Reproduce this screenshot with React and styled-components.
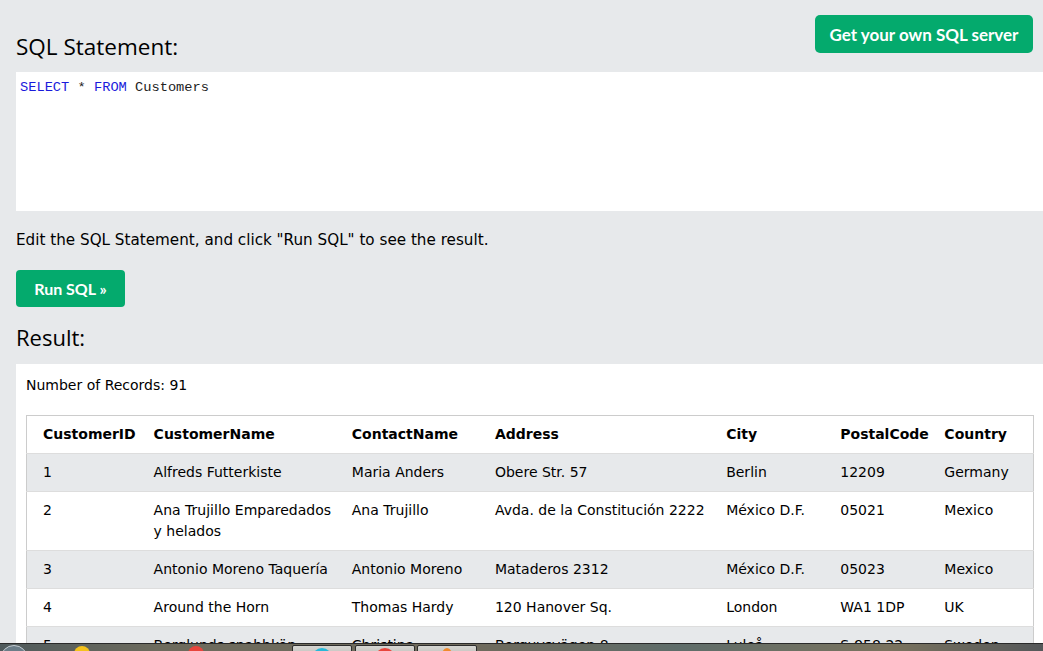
import React from "react";
import styled, { createGlobalStyle } from "styled-components";

const GlobalStyle = createGlobalStyle`
  html, body {
    margin: 0;
    padding: 0;
    overflow: hidden;
    background: #ffffff;
  }
  body {
    font-family: "DejaVu Sans", Verdana, sans-serif;
    font-size: 14px;
    color: #000000;
  }
`;

const rows = [
  ["1", "Alfreds Futterkiste", "Maria Anders", "Obere Str. 57", "Berlin", "12209", "Germany"],
  ["2", "Ana Trujillo Emparedados y helados", "Ana Trujillo", "Avda. de la Constitución 2222", "México D.F.", "05021", "Mexico"],
  ["3", "Antonio Moreno Taquería", "Antonio Moreno", "Mataderos 2312", "México D.F.", "05023", "Mexico"],
  ["4", "Around the Horn", "Thomas Hardy", "120 Hanover Sq.", "London", "WA1 1DP", "UK"],
  ["5", "Berglunds snabbköp", "Christina Berglund", "Berguvsvägen 8", "Luleå", "S-958 22", "Sweden"],
  ["6", "Blauer See Delikatessen", "Hanna Moos", "Forsterstr. 57", "Mannheim", "68306", "Germany"],
];

const columns = [
  ["CustomerID", 119],
  ["CustomerName", 198],
  ["ContactName", 143],
  ["Address", 231],
  ["City", 114],
  ["PostalCode", 104],
  ["Country", 97],
];

function App() {
  return (
    <>
      <GlobalStyle />
      <Page>
        <TopBar>
          <Heading>SQL Statement:</Heading>
          <ServerButton>Get your own SQL server</ServerButton>
        </TopBar>
        <Editor>
          <Keyword>SELECT</Keyword> * <Keyword>FROM</Keyword> Customers
        </Editor>
        <Hint>Edit the SQL Statement, and click "Run SQL" to see the result.</Hint>
        <RunButton>Run SQL »</RunButton>
        <ResultHeading>Result:</ResultHeading>
        <ResultBox>
          <Count>Number of Records: 91</Count>
          <Table>
            <colgroup>
              {columns.map(([name, w]) => (
                <col key={name} style={{ width: w }} />
              ))}
            </colgroup>
            <thead>
              <tr>
                {columns.map(([name]) => (
                  <HeadCell key={name}>{name}</HeadCell>
                ))}
              </tr>
            </thead>
            <tbody>
              {rows.map((r, i) => (
                <Row key={r[0]} $striped={i % 2 === 0}>
                  {r.map((v, j) => (
                    <Cell key={j}>{v}</Cell>
                  ))}
                </Row>
              ))}
            </tbody>
          </Table>
        </ResultBox>
      </Page>
      <Taskbar>
        <StartOrb />
        <PinnedIcon $color="#f5c21b" $left={74} />
        <PinnedIcon $color="#e8453c" $left={188} />
        <TaskButton $left={292}>
          <TaskDot $color="#27b8d8" />
        </TaskButton>
        <TaskButton $left={355}>
          <TaskDot $color="#e8453c" />
        </TaskButton>
        <TaskButton $left={417}>
          <TaskDot $color="#f08a2c" $small />
        </TaskButton>
      </Taskbar>
    </>
  );
}

const Page = styled.div`
  background: #e7e9eb;
  width: 1043px;
  min-height: 651px;
  padding-left: 16px;
  box-sizing: border-box;
`;

const TopBar = styled.div`
  display: flex;
  justify-content: space-between;
  align-items: flex-start;
  padding: 15px 10px 0 0;
  height: 72px;
  box-sizing: border-box;
`;

const Heading = styled.h2`
  margin: 17px 0 0;
  font-family: "Open Sans", "Noto Sans", sans-serif;
  font-weight: 400;
  font-size: 22.5px;
  line-height: 30px;
  color: #000;
`;

const ServerButton = styled.button`
  width: 218px;
  height: 38px;
  border: none;
  border-radius: 5px;
  background: #04aa6d;
  color: #fff;
  font-family: Lato, "Open Sans", sans-serif;
  font-weight: 700;
  font-size: 17px;
  padding: 0;
`;

const Editor = styled.div`
  background: #fff;
  height: 139px;
  padding: 7px 4px;
  box-sizing: border-box;
  font-family: "Liberation Mono", monospace;
  font-size: 13.7px;
  line-height: 17px;
  color: #222;
  white-space: pre;
`;

const Keyword = styled.span`
  color: #1a1adb;
`;

const Hint = styled.p`
  margin: 21px 0 0;
  font-size: 15.2px;
  line-height: 17px;
  color: #000;
`;

const RunButton = styled.button`
  display: block;
  margin-top: 21px;
  width: 109px;
  height: 37px;
  border: none;
  border-radius: 4px;
  background: #04aa6d;
  color: #fff;
  font-family: Lato, "Open Sans", sans-serif;
  font-weight: 700;
  font-size: 16px;
  padding: 0;
`;

const ResultHeading = styled.h2`
  margin: 15px 0 0;
  height: 42px;
  font-family: "Open Sans", "Noto Sans", sans-serif;
  font-weight: 400;
  font-size: 22px;
  line-height: 30px;
  color: #000;
`;

const ResultBox = styled.div`
  background: #fff;
  padding: 11px 9px 0 10px;
  min-height: 300px;
`;

const Count = styled.div`
  height: 40px;
  line-height: 21px;
  font-size: 14px;
`;

const Table = styled.table`
  border-collapse: collapse;
  table-layout: fixed;
  width: 1008px;
  border: 1px solid #cccccc;
  font-size: 14px;
`;

const HeadCell = styled.th`
  text-align: left;
  font-weight: 700;
  padding: 8px 8px;
  line-height: 21px;
  border-bottom: 1px solid #dddddd;
  &:first-child { padding-left: 16px; }
  &:last-child { padding-right: 16px; }
`;

const Row = styled.tr`
  background: ${(p) => (p.$striped ? "#e7e9eb" : "#ffffff")};
  border-bottom: 1px solid #dddddd;
`;

const Cell = styled.td`
  padding: 8px 8px;
  line-height: 21px;
  vertical-align: top;
  &:first-child { padding-left: 16px; }
  &:last-child { padding-right: 16px; }
`;

const Taskbar = styled.div`
  position: fixed;
  left: 0;
  right: 0;
  bottom: 0;
  height: 7px;
  border-top: 1px solid #2a2a2a;
  background: linear-gradient(90deg, #4f5a5c 0%, #6d6b5d 15%, #6f6a5c 45%, #5f6d6a 65%, #7a735e 85%, #55585a 100%);
  overflow: hidden;
`;

const StartOrb = styled.div`
  position: absolute;
  left: 0;
  top: 1px;
  width: 26px;
  height: 26px;
  border-radius: 50%;
  border: 1px solid #c4ccd2;
  background: #6b7d88;
`;

const PinnedIcon = styled.div`
  position: absolute;
  left: ${(p) => p.$left}px;
  top: 2px;
  width: 16px;
  height: 16px;
  border-radius: 50%;
  background: ${(p) => p.$color};
`;

const TaskButton = styled.div`
  position: absolute;
  left: ${(p) => p.$left}px;
  top: 1px;
  width: 58px;
  height: 20px;
  border: 1px solid #2d2d2d;
  border-radius: 2px;
  background: linear-gradient(180deg, #d6d6d2 0%, #a8a6a0 100%);
  display: flex;
  justify-content: center;
`;

const TaskDot = styled.div`
  margin-top: 2px;
  width: ${(p) => (p.$small ? 12 : 20)}px;
  height: 20px;
  border-radius: 50%;
  background: ${(p) => p.$color};
`;

export default App;
